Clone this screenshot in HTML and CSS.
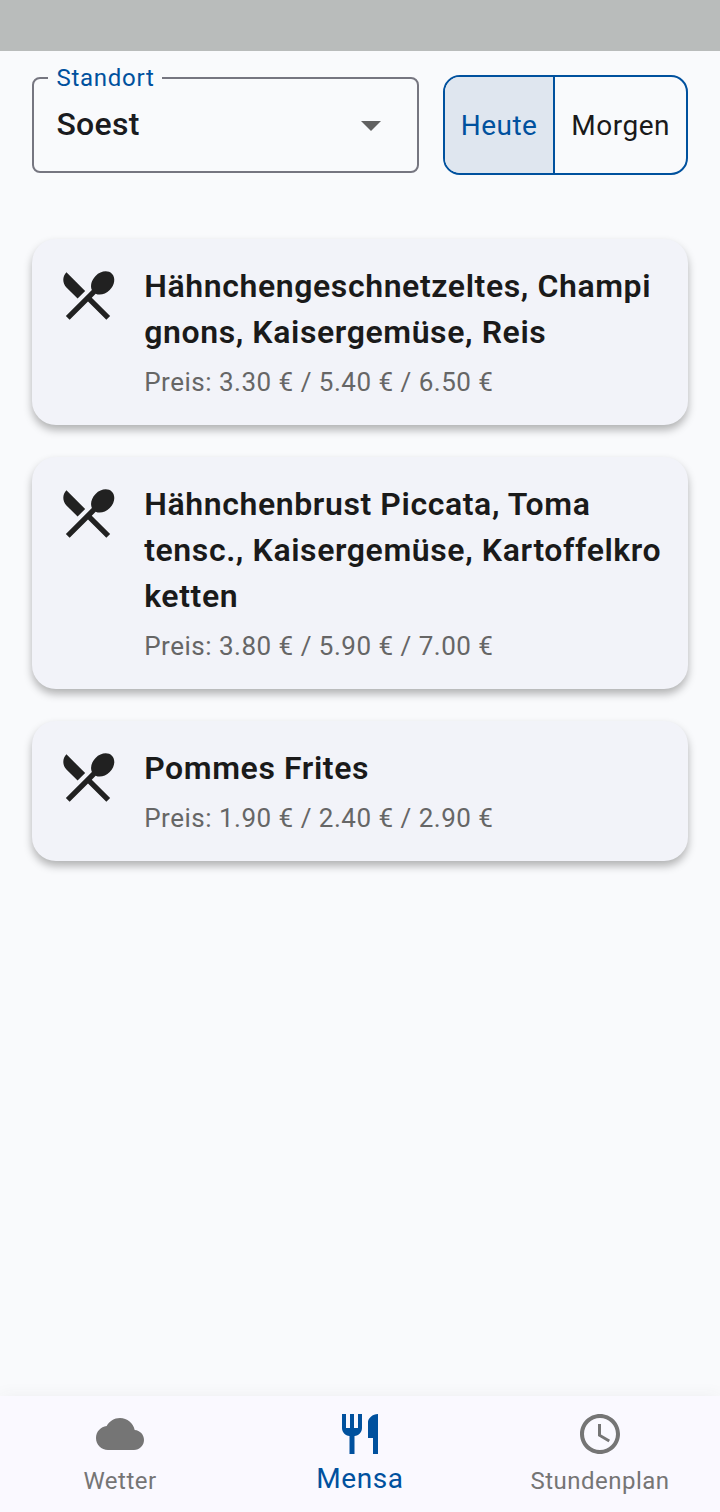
FILE: index.html
```html
<!DOCTYPE html>
<html lang="de">
<head>
<meta charset="utf-8">
<title>Mensa</title>
<link rel="stylesheet" href="styles.css">
</head>
<body>
<svg class="defs" aria-hidden="true">
  <symbol id="dish" viewBox="0 0 24 24"><path d="M8.1 13.34l2.83-2.83L3.91 3.5c-1.56 1.56-1.56 4.09 0 5.66l4.19 4.18zm6.78-1.81c1.53.71 3.68.21 5.27-1.38 1.91-1.91 2.28-4.65.81-6.12-1.46-1.46-4.2-1.1-6.12.81-1.59 1.59-2.09 3.74-1.38 5.27L3.7 19.87l1.41 1.41L12 14.41l6.88 6.88 1.41-1.41L13.41 13l1.47-1.47z"/></symbol>
</svg>
<div class="app">
  <div class="status"></div>
  <header class="filters">
    <fieldset class="select">
      <legend class="select-label">Standort</legend>
      <div class="select-row">
        <span class="select-value">Soest</span>
        <svg class="select-arrow" viewBox="0 0 24 24"><path d="M7 10l5 5 5-5z"/></svg>
      </div>
    </fieldset>
    <div class="toggle">
      <div class="toggle-item toggle-item-on">Heute</div>
      <div class="toggle-item">Morgen</div>
    </div>
  </header>
  <main class="list">
    <article class="card">
      <svg class="card-icon"><use href="#dish"/></svg>
      <div class="card-body">
        <div class="title">Hähnchengeschnetzeltes, Champi<br>gnons, Kaisergemüse, Reis</div>
        <div class="price">Preis: 3.30 € / 5.40 € / 6.50 €</div>
      </div>
    </article>
    <article class="card">
      <svg class="card-icon"><use href="#dish"/></svg>
      <div class="card-body">
        <div class="title">Hähnchenbrust Piccata, Toma<br>tensc., Kaisergemüse, Kartoffelkro<br>ketten</div>
        <div class="price">Preis: 3.80 € / 5.90 € / 7.00 €</div>
      </div>
    </article>
    <article class="card">
      <svg class="card-icon"><use href="#dish"/></svg>
      <div class="card-body">
        <div class="title">Pommes Frites</div>
        <div class="price">Preis: 1.90 € / 2.40 € / 2.90 €</div>
      </div>
    </article>
  </main>
  <nav class="nav">
    <div class="tab">
      <svg class="tab-icon" viewBox="0 0 24 24"><path d="M19.35 10.04C18.67 6.59 15.64 4 12 4 9.11 4 6.6 5.64 5.35 8.04 2.34 8.36 0 10.91 0 14c0 3.31 2.69 6 6 6h13c2.76 0 5-2.24 5-5 0-2.64-2.05-4.78-4.65-4.96z"/></svg>
      <span class="tab-label">Wetter</span>
    </div>
    <div class="tab tab-on">
      <svg class="tab-icon" viewBox="0 0 24 24"><path d="M11 9H9V2H7v7H5V2H3v7c0 2.12 1.66 3.84 3.75 3.97V22h2.5v-9.03C11.34 12.84 13 11.12 13 9V2h-2v7zm5-3v8h2.5v8H21V2c-2.76 0-5 2.24-5 4z"/></svg>
      <span class="tab-label">Mensa</span>
    </div>
    <div class="tab">
      <svg class="tab-icon" viewBox="0 0 24 24"><path d="M11.99 2C6.47 2 2 6.48 2 12s4.47 10 9.99 10C17.52 22 22 17.52 22 12S17.52 2 11.99 2zM12 20c-4.42 0-8-3.58-8-8s3.58-8 8-8 8 3.58 8 8-3.58 8-8 8zm.5-13H11v6l5.25 3.15.75-1.23-4.5-2.67z"/></svg>
      <span class="tab-label">Stundenplan</span>
    </div>
  </nav>
</div>
</body>
</html>
```
FILE: styles.css
```css
* { box-sizing: border-box; }
body { margin: 0; font-family: Roboto, sans-serif; background: #f9fafc; color: #1a1a1a; }
svg { display: block; flex: none; fill: currentColor; }
.defs { width: 0; height: 0; position: absolute; }
.app { height: 1512px; display: flex; flex-direction: column; overflow: hidden; }
.status { height: 51px; flex: none; background: #b9bcbb; }

.filters { display: flex; justify-content: space-between; padding: 12px 32px 0; height: 124px; }
.select { width: 386.67px; height: 110px; margin: 0; padding: 0 22px 0 22.4px; border: 2px solid #767680; border-radius: 8px; min-width: 0; }
.select-label { margin-left: -8px; padding: 0 7.3px 0 8px; height: 30px; line-height: 30px; font-size: 24px; letter-spacing: 0.75px; color: #00519e; white-space: nowrap; }
.select-row { display: flex; justify-content: space-between; align-items: flex-start; padding: 8px 0 0; }
.select-value { padding-top: 4px; font-size: 32px; line-height: 38px; font-weight: 500; letter-spacing: 0.3px; color: #1a1b20; }
.select-arrow { width: 48px; height: 48px; color: #616161; }

.toggle { width: 245.33px; height: 100px; margin-top: 12px; display: flex; border: 2px solid #00519e; border-radius: 17px; overflow: hidden; }
.toggle-item { flex: 1; padding-left: 16px; font-size: 28px; line-height: 98px; letter-spacing: 0.5px; }
.toggle-item-on { flex: none; width: 110.67px; background: #dfe6ef; color: #00519e; border-right: 2px solid #00519e; }

.list { flex: 1; display: flex; flex-direction: column; gap: 32px; padding: 64px 32px 0; }
.card { display: flex; gap: 24px; padding: 24px; border-radius: 24px; background: #f2f3f9; box-shadow: 0 5px 9px rgba(0,0,0,.29); }
.card-icon { width: 64px; height: 64px; color: #212121; }
.card-body { display: flex; flex-direction: column; gap: 8px; padding-left: 0.2px; white-space: nowrap; }
.title { font-size: 32px; line-height: 46px; font-weight: 600; letter-spacing: 0.6px; }
.price { font-size: 26px; line-height: 38px; letter-spacing: 0.5px; color: #666; }

.nav { flex: none; height: 116px; display: flex; background: #faf9ff; box-shadow: 0 0 16px rgba(60,70,60,.06); }
.tab { flex: 1; display: flex; flex-direction: column; align-items: center; padding-top: 14px; color: #757575; }
.tab-on { color: #00519e; }
.tab-icon { width: 48px; height: 48px; }
.tab-label { margin-top: 9px; font-size: 24px; line-height: 28px; letter-spacing: 0.5px; }
.tab-on .tab-label { margin-top: 5px; font-size: 28px; line-height: 32px; letter-spacing: 0.58px; }
```
